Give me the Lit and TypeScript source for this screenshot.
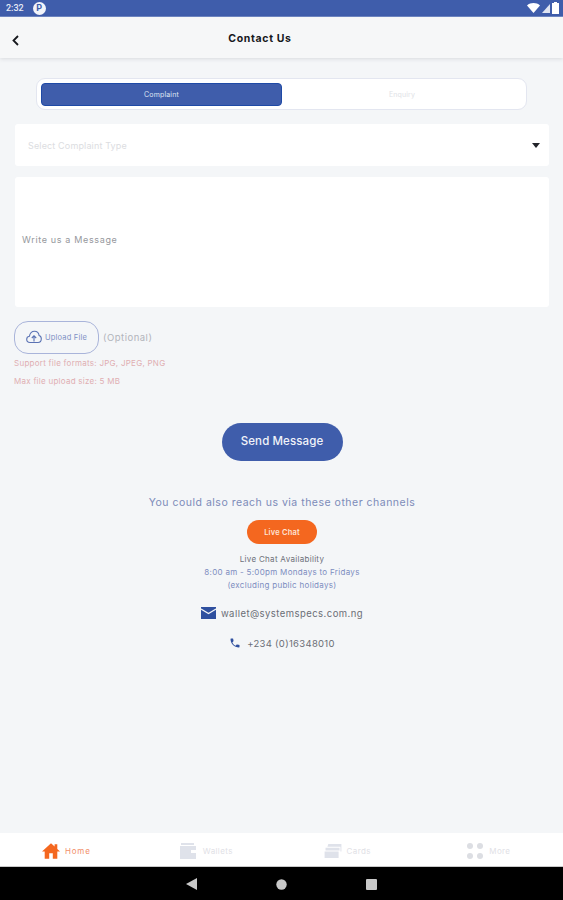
import { LitElement, html, css } from 'lit';
import { customElement } from 'lit/decorators.js';

@customElement('app-root')
export class AppRoot extends LitElement {
    static styles = css`
        :host {
            display: block;
            width: 563px;
            height: 900px;
            overflow: hidden;
            font-family: Inter, "Noto Sans", sans-serif;
            background: #f4f6f8;
        }
        .page {
            display: flex;
            flex-direction: column;
            height: 900px;
        }
        .status {
            height: 17px;
            flex: none;
            background: #3f5dab;
            color: #e6eaf5;
            display: flex;
            align-items: center;
            padding: 0 4px 0 6px;
            box-sizing: border-box;
            border-bottom: 1px solid #6f88c4;
            font: 500 9px Roboto, sans-serif;
        }
        .status .badge {
            width: 13px;
            height: 13px;
            border-radius: 50%;
            background: #f2f4fa;
            color: #3f5dab;
            margin-left: 9px;
            font: 700 9px/13px Roboto, sans-serif;
            text-align: center;
        }
        .status .right {
            margin-left: auto;
            display: flex;
            align-items: center;
            gap: 2px;
        }
        .header {
            height: 41px;
            flex: none;
            background: #f6f7f8;
            box-shadow: 0 1px 4px rgba(60, 60, 70, 0.14);
            display: flex;
            align-items: center;
            justify-content: center;
            position: relative;
            padding: 2px 43px 0 0;
            box-sizing: border-box;
            font-size: 10.5px;
            font-weight: 700;
            letter-spacing: 0.65px;
            color: #16181d;
        }
        .header svg {
            position: absolute;
            left: 11px;
            top: 18px;
        }
        .content {
            flex: 1;
            display: flex;
            flex-direction: column;
            padding: 20px 14px 0 15px;
            min-height: 0;
        }
        .segment {
            align-self: center;
            width: 491px;
            height: 32px;
            box-sizing: border-box;
            margin-left: -1px;
            padding: 4px 4px 3px 4px;
            display: flex;
            background: #fff;
            border: 1px solid #e3e6f0;
            border-radius: 9px;
            font-size: 7px;
            letter-spacing: 0.15px;
        }
        .segment div {
            display: flex;
            align-items: center;
            justify-content: center;
            flex: 1;
            color: #e0e2e6;
        }
        .segment .on {
            flex: none;
            width: 241px;
            background: #3f5dab;
            border: 1px solid #1f4aa6;
            box-sizing: border-box;
            border-radius: 4px;
            color: #dfe5f3;
        }
        .select {
            margin-top: 14px;
            height: 42px;
            background: #fff;
            border-radius: 3px;
            display: flex;
            align-items: center;
            justify-content: space-between;
            padding: 0 9px 0 13px;
            font-size: 9px;
            letter-spacing: 0.15px;
            color: #dcdde1;
        }
        .caret {
            width: 0;
            height: 0;
            border-left: 4px solid transparent;
            border-right: 4px solid transparent;
            border-top: 5px solid #22242a;
        }
        .message {
            margin-top: 11px;
            height: 130px;
            background: #fff;
            border-radius: 3px;
            display: flex;
            align-items: center;
            padding: 0 7px 6px;
            box-sizing: border-box;
            font-size: 9px;
            letter-spacing: 0.65px;
            color: #96989d;
        }
        .upload {
            margin-top: 14px;
            margin-left: -1px;
            display: flex;
            align-items: center;
            gap: 4px;
        }
        .upload-btn {
            width: 85px;
            height: 33px;
            box-sizing: border-box;
            border: 1px solid #a9b4da;
            border-radius: 14px;
            display: flex;
            align-items: center;
            justify-content: center;
            gap: 3px;
            padding-bottom: 1px;
            font-size: 7.5px;
            letter-spacing: 0.2px;
            color: #8091c4;
        }
        .optional {
            font-size: 9.5px;
            letter-spacing: 0.5px;
            color: #b2b4bb;
        }
        .hint {
            margin-left: -1px;
            font-size: 8px;
            letter-spacing: 0.26px;
            color: #e0aeb2;
            line-height: 10px;
        }
        .hint.a {
            margin-top: 4px;
        }
        .hint.b {
            margin-top: 8px;
        }
        .center {
            display: flex;
            flex-direction: column;
            align-items: center;
            margin-top: 1px;
        }
        .send {
            margin-top: 36px;
            width: 121px;
            height: 38px;
            padding-bottom: 2px;
            box-sizing: border-box;
            border-radius: 19px;
            background: #3f5dab;
            color: #f1f3f9;
            display: flex;
            align-items: center;
            justify-content: center;
            font-size: 11.5px;
            letter-spacing: 0.1px;
            font-weight: 500;
        }
        .also {
            margin-top: 35px;
            font-size: 10.5px;
            line-height: 14px;
            color: #7c8bb9;
            letter-spacing: 0.5px;
        }
        .chat {
            margin-top: 10px;
            width: 70px;
            height: 24px;
            border-radius: 12px;
            background: #f4671f;
            color: #fde4d6;
            display: flex;
            align-items: center;
            justify-content: center;
            font-size: 7.5px;
            letter-spacing: 0.2px;
            font-weight: 600;
        }
        .avail {
            margin-top: 9px;
            font-size: 8px;
            line-height: 13px;
            letter-spacing: 0.3px;
            color: #6d7078;
            text-align: center;
        }
        .avail .hours {
            color: #7d8dc0;
        }
        .contact {
            display: flex;
            align-items: center;
            font-size: 9.5px;
            letter-spacing: 0.45px;
            color: #6b6e76;
        }
        .contact.mail {
            margin-top: 15px;
            gap: 5px;
        }
        .contact.phone {
            margin-top: 18px;
            gap: 6px;
            letter-spacing: 0.3px;
        }
        .tabs {
            height: 34px;
            flex: none;
            background: #fff;
            display: grid;
            grid-template-columns: repeat(4, 1fr);
            box-sizing: border-box;
            border-bottom: 1px solid #c9c9c9;
            font-size: 8px;
            letter-spacing: 0.4px;
            color: #dfe1e6;
        }
        .tab {
            display: flex;
            align-items: center;
            gap: 5px;
            padding-top: 2px;
        }
        .tab.home {
            padding-left: 42px;
            color: #f2906a;
            letter-spacing: 0.8px;
        }
        .tab.wallets {
            padding-left: 39px;
            gap: 6px;
        }
        .tab.cards {
            padding-left: 42px;
        }
        .tab.more {
            padding-left: 44px;
        }
        .nav {
            height: 33px;
            flex: none;
            background: #000;
            display: flex;
            align-items: center;
            justify-content: center;
            gap: 79px;
            padding-top: 1px;
            box-sizing: border-box;
        }
    `;

    render() {
        return html`
            <div class="page">
                <div class="status">
                    <span>2:32</span>
                    <span class="badge">P</span>
                    <span class="right">
                        <svg width="13" height="10" viewBox="0 0 13 10"><path d="M0 2.5C3.6-.7 9.4-.7 13 2.500L6.500 10z" fill="#fff"/></svg>
                        <svg width="8" height="9" viewBox="0 0 8 9"><path d="M8 0v9H0z" fill="#dfe4f2"/></svg>
                        <svg width="7" height="12" viewBox="0 0 7 12"><path d="M2 0h3v1h2v11H0V1h2z" fill="#fff"/></svg>
                    </span>
                </div>
                <div class="header">
                    <svg width="9" height="11" viewBox="0 0 9 11"><path d="M7 1L2.500 5.500L7 10" fill="none" stroke="#16181d" stroke-width="1.800"/></svg>
                    Contact Us
                </div>
                <div class="content">
                    <div class="segment">
                        <div class="on">Complaint</div>
                        <div>Enquiry</div>
                    </div>
                    <div class="select">
                        <span>Select Complaint Type</span>
                        <span class="caret"></span>
                    </div>
                    <div class="message">Write us a Message</div>
                    <div class="upload">
                        <div class="upload-btn">
                            <svg width="16" height="14" viewBox="0 0 16 14">
                                <path d="M4 12.500C1.800 12.500.7 11 .7 9.300C.7 7.700 1.900 6.500 3.400 6.300C3.900 3.300 6 1.200 8.500 1.200C11 1.200 12.800 3 13.100 5.500C14.500 5.900 15.300 7.200 15.300 8.800C15.300 10.900 14 12.500 12 12.500Z" fill="none" stroke="#5a72b3" stroke-width="1.100"/>
                                <path d="M8 11.500V6M5.800 8L8 5.800L10.200 8" fill="none" stroke="#5a72b3" stroke-width="1.100"/>
                            </svg>
                            Upload File
                        </div>
                        <span class="optional">(Optional)</span>
                    </div>
                    <div class="hint a">Support file formats: JPG, JPEG, PNG</div>
                    <div class="hint b">Max file upload size: 5 MB</div>
                    <div class="center">
                        <div class="send">Send Message</div>
                        <div class="also">You could also reach us via these other channels</div>
                        <div class="chat">Live Chat</div>
                        <div class="avail">
                            Live Chat Availability<br />
                            <span class="hours">8:00 am - 5:00pm Mondays to Fridays<br />(excluding public holidays)</span>
                        </div>
                        <div class="contact mail">
                            <svg width="15" height="12" viewBox="0 0 15 12"><path d="M0 0h15v12H0z" fill="#2f509f"/><path d="M0 2l7.500 4.500L15 2" fill="none" stroke="#f4f6f9" stroke-width="1.200"/></svg>
                            wallet@systemspecs.com.ng
                        </div>
                        <div class="contact phone">
                            <svg width="12" height="12" viewBox="0 0 24 24"><path d="M6.600 10.800c1.400 2.800 3.800 5.100 6.600 6.600l2.200-2.200c.3-.3.700-.4 1-.2 1.100.4 2.300.6 3.600.6.600 0 1 .4 1 1V20c0 .6-.4 1-1 1C10.600 21 3 13.400 3 4c0-.6.400-1 1-1h3.500c.6 0 1 .4 1 1 0 1.300.2 2.500.6 3.600.1.300 0 .7-.2 1z" fill="#2f509f"/></svg>
                            +234 (0)16348010
                        </div>
                    </div>
                </div>
                <div class="tabs">
                    <div class="tab home">
                        <svg width="18" height="16" viewBox="0 0 20 17"><path d="M10 0L0 9h3v8h5v-6h4v6h5V9h3l-3-2.700V1h-3v2.600z" fill="#f4671f"/></svg>
                        Home
                    </div>
                    <div class="tab wallets">
                        <svg width="17" height="16" viewBox="0 0 17 16"><path d="M1 0h13v2H1z" fill="#dfe2ea"/><path d="M0 3h16v4h-5v3h5v6H0z" fill="#dfe2ea"/></svg>
                        Wallets
                    </div>
                    <div class="tab cards">
                        <svg width="18" height="14" viewBox="0 0 18 15"><path d="M4 0h14v8h-1V3H3z" fill="#dfe2ea"/><path d="M1 4h15v3H1zM0 8h15v7H0z" fill="#dfe2ea"/></svg>
                        Cards
                    </div>
                    <div class="tab more">
                        <svg width="18" height="18" viewBox="0 0 18 18"><g fill="#dcdee3"><circle cx="4" cy="4" r="3"/><circle cx="14" cy="4" r="3"/><circle cx="4" cy="14" r="3"/><circle cx="14" cy="14" r="3"/></g></svg>
                        More
                    </div>
                </div>
                <div class="nav">
                    <svg width="11" height="12" viewBox="0 0 11 12"><path d="M11 0v12L0 6z" fill="#c9c9c9"/></svg>
                    <svg width="11" height="11" viewBox="0 0 11 11"><circle cx="5.500" cy="5.500" r="5.200" fill="#c9c9c9"/></svg>
                    <svg width="11" height="11" viewBox="0 0 11 11"><rect width="11" height="11" rx="1" fill="#c9c9c9"/></svg>
                </div>
            </div>
        `;
    }
}
